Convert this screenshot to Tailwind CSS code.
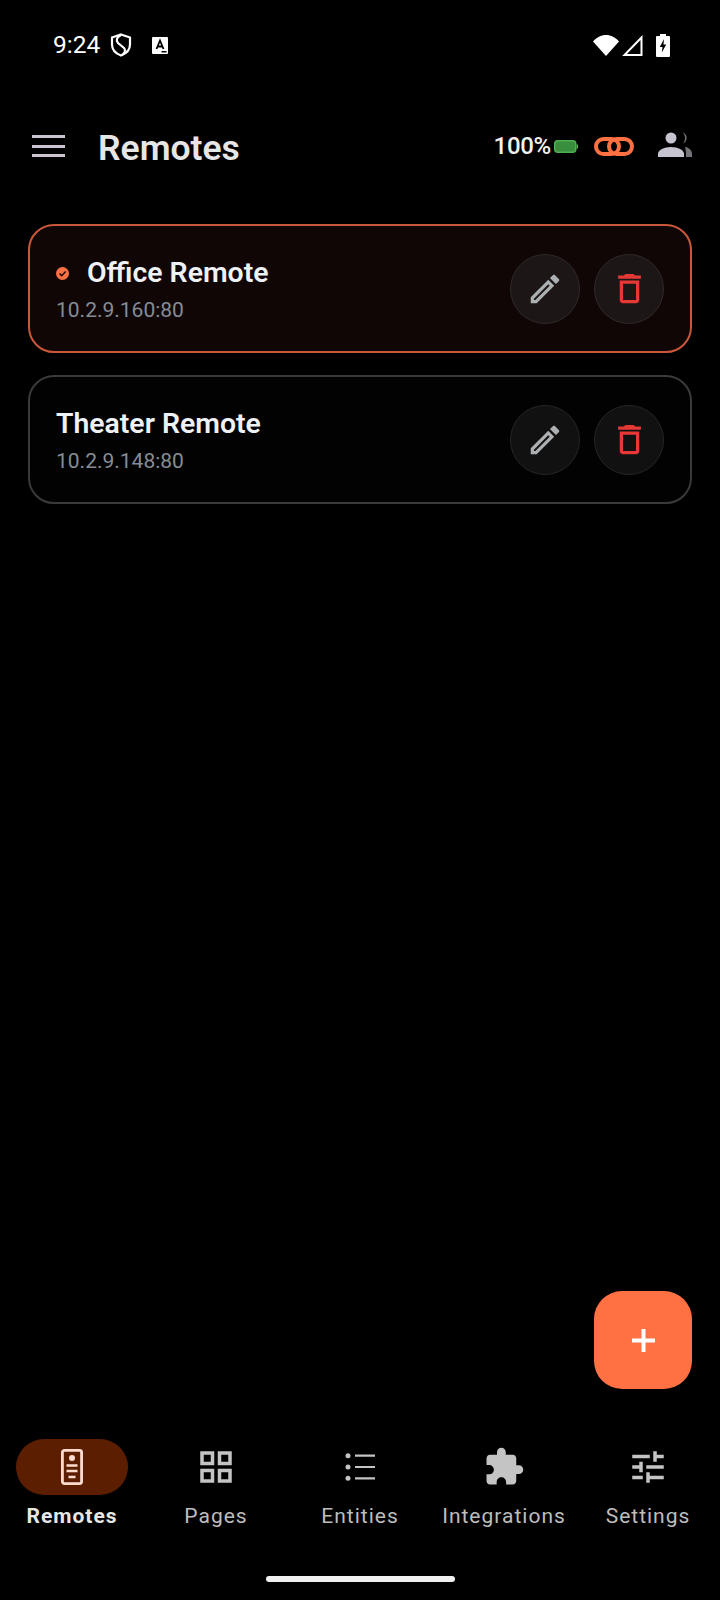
<!DOCTYPE html>
<html lang="en">
<head>
<meta charset="UTF-8">
<meta name="viewport" content="width=device-width, initial-scale=1.0">
<title>Remotes</title>
<script src="https://cdn.jsdelivr.net/npm/@tailwindcss/browser@4"></script>
</head>
<body class="bg-black">
<div class="relative flex flex-col w-[720px] h-[1600px] bg-black text-white font-['Roboto',sans-serif] overflow-hidden">

  <!-- Status bar -->
  <div class="flex items-center h-[90px] pl-[53px] pr-[50px]">
    <span class="text-[24.500px] leading-none text-white w-[57px]">9:24</span>
    <svg class="w-[22px] h-[24px]" viewBox="0 0 22 24" fill="none" stroke="#fff" stroke-width="2.200"><path d="M11 1.500 20 4.500v7c0 5.500-3.600 9-9 11C5.600 20.500 2 17 2 11.500v-7z"/><path d="M11 2C7 4 5.500 7 8 10l6 5c2 2 1 5-2 7"/></svg>
    <svg class="w-[16px] h-[17px] ml-[20px]" viewBox="0 0 16 17"><rect width="16" height="17" rx="1" fill="#fff"/><path d="M4.500 12 8 3.500 11.500 12M6 9.500h4" fill="none" stroke="#000" stroke-width="1.800"/><rect x="9.500" y="14" width="5" height="1.500" fill="#000"/></svg>
    <div class="flex-1"></div>
    <svg class="w-[26px] h-[21px]" viewBox="0 0 26 21"><path d="M13 21 0 6.500C3.500 2.500 8 0 13 0s9.500 2.500 13 6.500z" fill="#fff"/></svg>
    <svg class="w-[21px] h-[21px] ml-[3px]" viewBox="0 0 21 21" fill="none" stroke="#fff" stroke-width="2"><path d="M19.500 2.500V20H2.500z"/></svg>
    <svg class="w-[14px] h-[23px] ml-[13px]" viewBox="0 0 14 23"><path d="M4 0h6v2h3a1 1 0 0 1 1 1v19a1 1 0 0 1-1 1H1a1 1 0 0 1-1-1V3a1 1 0 0 1 1-1h3z" fill="#fff"/><path d="M8 5 3.800 13H6.500L5.800 18.500 10.200 10.500H7.500z" fill="#000"/></svg>
  </div>

  <!-- Header -->
  <div class="flex items-center h-[114px] pl-[32px] pr-[28px]">
    <div class="flex flex-col justify-between w-[33px] h-[22px] -mt-[2px]">
      <div class="h-[3px] bg-[#cac4d0]"></div>
      <div class="h-[3px] bg-[#cac4d0]"></div>
      <div class="h-[3px] bg-[#cac4d0]"></div>
    </div>
    <h1 class="ml-[33px] mt-[4px] text-[35.500px] font-semibold text-[#e6e6e6] leading-none">Remotes</h1>
    <div class="flex-1"></div>
    <span class="text-[24px] font-medium tracking-[-0.3px] leading-none text-[#f0f0f0] -mt-[2px]">100%</span>
    <svg class="w-[24px] h-[13px] ml-[3px] -mt-[1px]" viewBox="0 0 24 13"><rect x=".75" y=".75" width="21" height="11.500" rx="3" fill="#388e3c" stroke="#4caf50" stroke-width="1.500"/><rect x="22.500" y="4.500" width="1.500" height="4" fill="#4caf50"/></svg>
    <svg class="w-[40px] h-[19px] ml-[16px] -mt-[1px]" viewBox="0 0 40 19" fill="none" stroke="#ff7043" stroke-width="4"><rect x="2" y="2" width="23" height="15" rx="7.500"/><rect x="15" y="2" width="23" height="15" rx="7.500"/></svg>
    <svg class="w-[34px] h-[25px] ml-[24px] -mt-[5px]" viewBox="0 0 34 25"><circle cx="13" cy="6" r="5.500" fill="#c8c3d0"/><path d="M0 25v-3c0-4 6-7 13-7s13 3 13 7v3z" fill="#c8c3d0"/><path d="M25 .500a6 6 0 0 1 0 11 9 9 0 0 0 0-11z" fill="#77747c"/><path d="M27 15c4 .5 7 3 7 7v3h-6v-3c0-3-.5-5-1-7z" fill="#77747c"/></svg>
  </div>

  <!-- Remote list -->
  <div class="flex flex-col flex-1 gap-[22px] pt-[20px] px-[28px]">
    <div class="flex items-center h-[129px] pl-[26px] pr-[26px] rounded-[26px] border-2 border-[#c9583a] bg-[#100605]">
      <div class="flex-1 pt-[2px]">
        <div class="flex items-center">
          <svg class="w-[13px] h-[13px] mr-[18px]" viewBox="0 0 13 13"><circle cx="6.500" cy="6.500" r="6.500" fill="#ff7043"/><path d="M3.500 6.500 5.700 8.800 9.600 4.600" fill="none" stroke="#100605" stroke-width="1.400"/></svg>
          <span class="text-[28.400px] font-semibold leading-[36px] text-[#eef1f5]">Office Remote</span>
        </div>
        <div class="text-[21px] leading-[28px] mt-[5px] text-[#868c96]">10.2.9.160:80</div>
      </div>
      <button class="flex items-center justify-center w-[70px] h-[70px] rounded-full border border-[#2f2a29] bg-[#1c1716]">
        <svg class="w-[38px] h-[38px]" viewBox="0 0 24 24" fill="#adb0b2"><path d="M14.060 9.020l.92.92L5.920 19H5v-.92l9.060-9.060M17.660 3c-.25 0-.51.1-.7.29l-1.830 1.830 3.750 3.750 1.830-1.830c.39-.39.39-1.020 0-1.410l-2.340-2.340c-.2-.2-.45-.29-.71-.29zm-3.600 3.190L3 17.250V21h3.750L17.810 9.940l-3.750-3.750z"/></svg>
      </button>
      <button class="flex items-center justify-center w-[70px] h-[70px] ml-[14px] rounded-full border border-[#2f2a29] bg-[#1c1716]">
        <svg class="w-[39px] h-[39px]" viewBox="0 0 24 24" fill="#e53935"><path d="M6 19c0 1.100.9 2 2 2h8c1.100 0 2-.9 2-2V7H6v12zM8 9h8v10H8V9zm7.500-5l-1-1h-5l-1 1H5v2h14V4z"/></svg>
      </button>
    </div>

    <div class="flex items-center h-[129px] pl-[26px] pr-[26px] rounded-[26px] border-2 border-[#3a3a3a] bg-[#020202]">
      <div class="flex-1 pt-[2px]">
        <div class="text-[28.400px] font-semibold leading-[36px] text-[#eef1f5]">Theater Remote</div>
        <div class="text-[21px] leading-[28px] mt-[5px] text-[#868c96]">10.2.9.148:80</div>
      </div>
      <button class="flex items-center justify-center w-[70px] h-[70px] rounded-full border border-[#262626] bg-[#111111]">
        <svg class="w-[38px] h-[38px]" viewBox="0 0 24 24" fill="#adb0b2"><path d="M14.060 9.020l.92.92L5.920 19H5v-.92l9.060-9.060M17.660 3c-.25 0-.51.1-.7.29l-1.830 1.830 3.750 3.750 1.830-1.830c.39-.39.39-1.020 0-1.410l-2.340-2.340c-.2-.2-.45-.29-.71-.29zm-3.600 3.190L3 17.250V21h3.750L17.810 9.940l-3.750-3.750z"/></svg>
      </button>
      <button class="flex items-center justify-center w-[70px] h-[70px] ml-[14px] rounded-full border border-[#262626] bg-[#111111]">
        <svg class="w-[39px] h-[39px]" viewBox="0 0 24 24" fill="#e53935"><path d="M6 19c0 1.100.9 2 2 2h8c1.100 0 2-.9 2-2V7H6v12zM8 9h8v10H8V9zm7.500-5l-1-1h-5l-1 1H5v2h14V4z"/></svg>
      </button>
    </div>
  </div>

  <!-- Add button -->
  <button class="absolute right-[28px] bottom-[211px] flex items-center justify-center w-[98px] h-[98px] rounded-[28px] bg-[#ff7043]">
    <svg class="w-[23px] h-[23px]" viewBox="0 0 23 23" fill="#fff"><path d="M9.500 0h4v9.500H23v4h-9.500V23h-4v-9.500H0v-4h9.500z"/></svg>
  </button>

  <!-- Bottom navigation -->
  <nav class="grid grid-cols-5 h-[170px] pt-[9px]">
    <div class="flex flex-col items-center">
      <div class="flex items-center justify-center w-[112px] h-[56px] rounded-full bg-[#5c1e00]">
        <svg class="w-[22px] h-[36px]" viewBox="0 0 22 36" fill="none" stroke="#ffdbcf" stroke-width="2.800"><rect x="1.400" y="1.400" width="19.200" height="33.200" rx="2"/><circle cx="11" cy="9" r="3" fill="#ffdbcf" stroke="none"/><path d="M5.500 16.500h11M5.500 22h11M7.500 28h7" stroke-width="2.400"/></svg>
      </div>
      <span class="mt-[9px] text-[21px] leading-[24px] font-bold tracking-[1px] text-[#e6e6e6]">Remotes</span>
    </div>
    <div class="flex flex-col items-center">
      <div class="flex items-center justify-center h-[56px]">
        <svg class="w-[42px] h-[42px]" viewBox="0 0 24 24" fill="#c4c4c4"><path d="M3 3v8h8V3H3zm6 6H5V5h4v4zm-6 4v8h8v-8H3zm6 6H5v-4h4v4zm4-16v8h8V3h-8zm6 6h-4V5h4v4zm-6 4v8h8v-8h-8zm6 6h-4v-4h4v4z"/></svg>
      </div>
      <span class="mt-[9px] text-[21px] leading-[24px] font-normal tracking-[1px] text-[#bdbdbd]">Pages</span>
    </div>
    <div class="flex flex-col items-center">
      <div class="flex items-center justify-center h-[56px]">
        <svg class="w-[40px] h-[40px]" viewBox="0 0 24 24" fill="#c4c4c4"><circle cx="4.800" cy="5.200" r="1.500"/><circle cx="4.800" cy="12" r="1.500"/><circle cx="4.800" cy="18.800" r="1.500"/><path d="M9 4.550H21v1.300H9zM9 11.350H21v1.300H9zM9 18.150H21v1.300H9z"/></svg>
      </div>
      <span class="mt-[9px] text-[21px] leading-[24px] font-normal tracking-[1px] text-[#bdbdbd]">Entities</span>
    </div>
    <div class="flex flex-col items-center">
      <div class="flex items-center justify-center h-[56px]">
        <svg class="w-[42px] h-[42px]" viewBox="0 0 24 24" fill="#c4c4c4"><path d="M20.500 11H19V7c0-1.100-.9-2-2-2h-4V3.500C13 2.120 11.880 1 10.500 1S8 2.120 8 3.500V5H4c-1.100 0-1.990.9-1.990 2v3.800H3.500c1.490 0 2.700 1.210 2.700 2.700s-1.210 2.700-2.700 2.700H2V20c0 1.100.9 2 2 2h3.800v-1.500c0-1.490 1.210-2.700 2.700-2.700 1.490 0 2.700 1.210 2.700 2.700V22H17c1.100 0 2-.9 2-2v-4h1.500c1.380 0 2.500-1.120 2.500-2.500S21.880 11 20.500 11z"/></svg>
      </div>
      <span class="mt-[9px] text-[21px] leading-[24px] font-normal tracking-[1px] text-[#bdbdbd]">Integrations</span>
    </div>
    <div class="flex flex-col items-center">
      <div class="flex items-center justify-center h-[56px]">
        <svg class="w-[42px] h-[42px]" viewBox="0 0 24 24" fill="#c4c4c4"><path d="M3 17v2h6v-2H3zM3 5v2h10V5H3zm10 16v-2h8v-2h-8v-2h-2v6h2zM7 9v2H3v2h4v2h2V9H7zm14 4v-2H11v2h10zm-6-4h2V7h4V5h-4V3h-2v6z"/></svg>
      </div>
      <span class="mt-[9px] text-[21px] leading-[24px] font-normal tracking-[1px] text-[#bdbdbd]">Settings</span>
    </div>
  </nav>

  <!-- Home indicator -->
  <div class="absolute bottom-[18px] left-[266px] w-[189px] h-[6px] rounded-full bg-[#f0f0f0]"></div>
</div>
</body>
</html>
